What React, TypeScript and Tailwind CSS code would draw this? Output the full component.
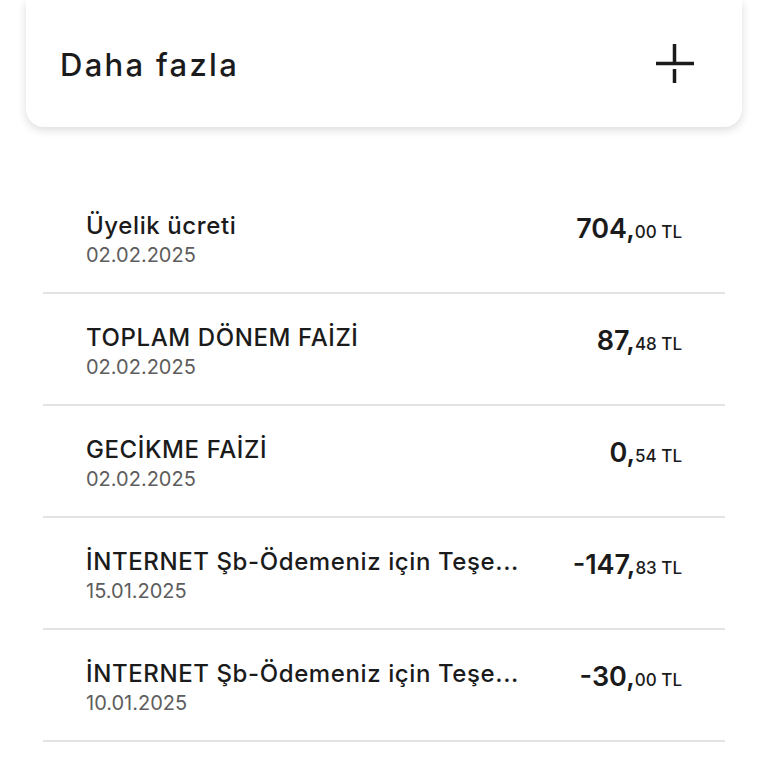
import React from 'react';

type Row = { title: string; date: string; whole: string; cents: string };

const rows: Row[] = [
  { title: 'Üyelik ücreti', date: '02.02.2025', whole: '704', cents: '00' },
  { title: 'TOPLAM DÖNEM FAİZİ', date: '02.02.2025', whole: '87', cents: '48' },
  { title: 'GECİKME FAİZİ', date: '02.02.2025', whole: '0', cents: '54' },
  { title: 'İNTERNET Şb-Ödemeniz için Teşe...', date: '15.01.2025', whole: '-147', cents: '83' },
  { title: 'İNTERNET Şb-Ödemeniz için Teşe...', date: '10.01.2025', whole: '-30', cents: '00' },
];

const App: React.FC = () => {
  return (
    <div className="min-h-[768px] w-[768px] overflow-hidden bg-white font-['Inter','Liberation_Sans',sans-serif] text-[#1b1b1b]">
      <div className="mx-[26px] flex h-[127px] items-center justify-between rounded-b-[18px] bg-white pl-[34px] pr-[46px] shadow-[0_3px_10px_rgba(0,0,0,0.14)]">
        <span className="pt-[3px] text-[31px] font-medium tracking-[2.3px]">Daha fazla</span>
        <svg width="40" height="40" viewBox="0 0 40 40" className="text-[#1b1b1b]">
          <path d="M0 19.5H38M18.5 0V21M18.5 25V39" stroke="currentColor" strokeWidth="3.5" fill="none" />
        </svg>
      </div>

      <div className="mx-[43px] mt-[55px]">
        {rows.map((r, i) => (
          <div key={i} className="flex h-[112px] justify-between border-b-2 border-[#e3e3e3] px-[43px]">
            <div className="min-w-0 pt-[30px]">
              <div className="whitespace-nowrap text-[24px] leading-[28px] font-medium tracking-[0.6px]">{r.title}</div>
              <div className="mt-[3px] text-[20px] leading-[24px] text-[#5d5d5d]">{r.date}</div>
            </div>
            <div className="flex items-baseline whitespace-nowrap pt-[31px]">
              <span className="text-[27px] leading-[32px] font-semibold">{r.whole},</span>
              <span className="text-[17px] font-medium">{r.cents} TL</span>
            </div>
          </div>
        ))}
      </div>
    </div>
  );
};

export default App;
